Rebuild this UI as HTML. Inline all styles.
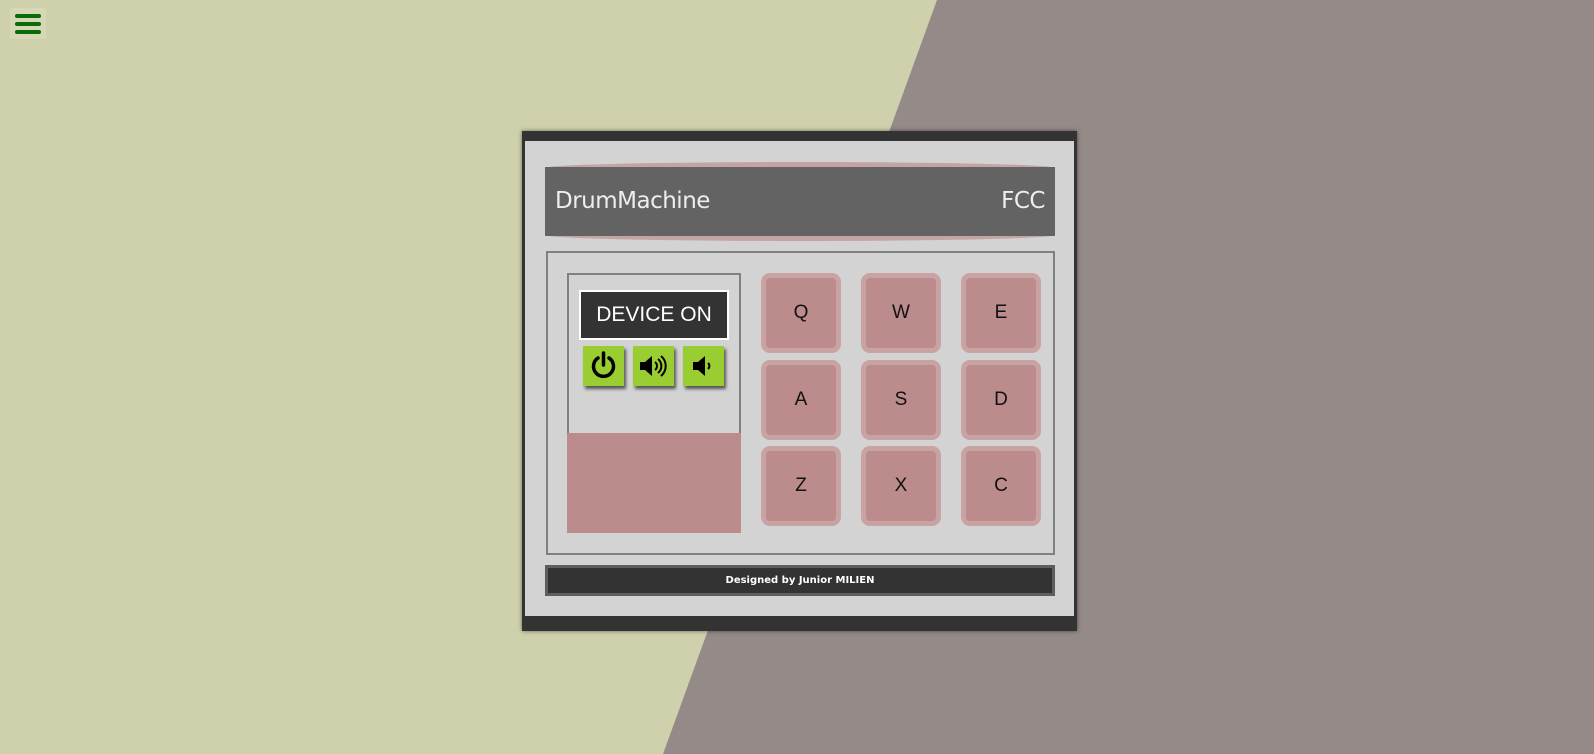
<!DOCTYPE html>
<html><head><style>
*{margin:0;padding:0;box-sizing:border-box}
html,body{width:1594px;height:754px;overflow:hidden}
body{position:relative;background:#cfd0ac;font-family:"Liberation Sans",sans-serif}
.bgr{position:absolute;left:0;top:0;width:1594px;height:754px}
.ham{position:absolute;left:10px;top:8px;width:36px;height:31px;background:#d6d7b4}
.ham i{position:absolute;left:5px;width:26px;height:4px;border-radius:2px;background:#0b6b0b}
.m{position:absolute;left:522px;top:131px;width:555px;height:500px;background:#d3d3d3;border:solid #333;border-width:10px 3px 15px 3px;box-shadow:0 0 4px rgba(0,0,0,.5)}
.hd{position:absolute;left:545px;top:162px;width:510px;height:79px;background:#c4a3a3;border-radius:50%/6px}
.hd2{position:absolute;left:545px;top:167px;width:510px;height:69px;background:#636363;color:#eee;font-size:23px;line-height:69px;padding:0 10px;display:flex;justify-content:space-between;font-family:"DejaVu Sans","Liberation Sans",sans-serif;letter-spacing:-.5px}
.pn{position:absolute;left:546px;top:251px;width:509px;height:304px;border:2px solid #808080}
.ld{position:absolute;left:567px;top:273px;width:174px;height:260px;border:2px solid #808080;border-bottom:none;background:#d3d3d3}
.ld .pk{position:absolute;left:-2px;right:-2px;bottom:0;height:100px;background:#bb8c8b}
.dev{position:absolute;left:579px;top:290px;width:150px;height:50px;background:#333;border:2px solid #fff;color:#fff;font-size:21px;text-align:center;line-height:46px}
.b{position:absolute;top:346px;width:41px;height:40px;background:#9acd32;box-shadow:2px 3px 3px rgba(0,0,0,.6)}
.b svg{position:absolute;left:0;top:0}
.p{position:absolute;width:80px;height:80px;background:#bb8c8b;border:5px solid #c9a3a3;border-radius:9px;font-size:19px;text-align:center;line-height:70px;color:#111}
.ft{position:absolute;left:545px;top:565px;width:510px;height:31px;background:#333;border:3px solid #5e5e5e;color:#fff;font-family:"DejaVu Sans",sans-serif;font-weight:bold;font-size:10px;text-align:center;line-height:25px}
</style></head><body>
<svg class="bgr" viewBox="0 0 1594 754"><polygon points="937,0 1594,0 1594,754 663,754" fill="#948a88"/></svg>
<div class="ham"><i style="top:6px"></i><i style="top:14px"></i><i style="top:22px"></i></div>
<div class="m"></div>
<div class="hd"></div>
<div class="hd2"><span>DrumMachine</span><span>FCC</span></div>
<div class="pn"></div>
<div class="ld"><div class="pk"></div></div>
<div class="dev">DEVICE ON</div>
<div class="b" style="left:583px"><svg width="41" height="40"><path d="M15 12 A10 10 0 1 0 26 12" fill="none" stroke="#000" stroke-width="3.5" stroke-linecap="round"/><line x1="20.5" y1="7" x2="20.5" y2="19" stroke="#000" stroke-width="3.5" stroke-linecap="round"/></svg></div>
<div class="b" style="left:633px"><svg width="41" height="40"><path d="M7 16h5l7-6v20l-7-6H7z" fill="#000"/><path d="M22 16a5 5 0 0 1 0 8M25 13a9 9 0 0 1 0 14M28 10a13 13 0 0 1 0 20" fill="none" stroke="#000" stroke-width="2"/></svg></div>
<div class="b" style="left:683px"><svg width="41" height="40"><path d="M10 16h5l7-6v20l-7-6h-5z" fill="#000"/><path d="M25 17a4 4 0 0 1 0 6" fill="none" stroke="#000" stroke-width="2"/></svg></div>
<div class="p" style="left:761px;top:273px">Q</div>
<div class="p" style="left:861px;top:273px">W</div>
<div class="p" style="left:961px;top:273px">E</div>
<div class="p" style="left:761px;top:360px">A</div>
<div class="p" style="left:861px;top:360px">S</div>
<div class="p" style="left:961px;top:360px">D</div>
<div class="p" style="left:761px;top:446px">Z</div>
<div class="p" style="left:861px;top:446px">X</div>
<div class="p" style="left:961px;top:446px">C</div>
<div class="ft">Designed by Junior MILIEN</div>
</body></html>
